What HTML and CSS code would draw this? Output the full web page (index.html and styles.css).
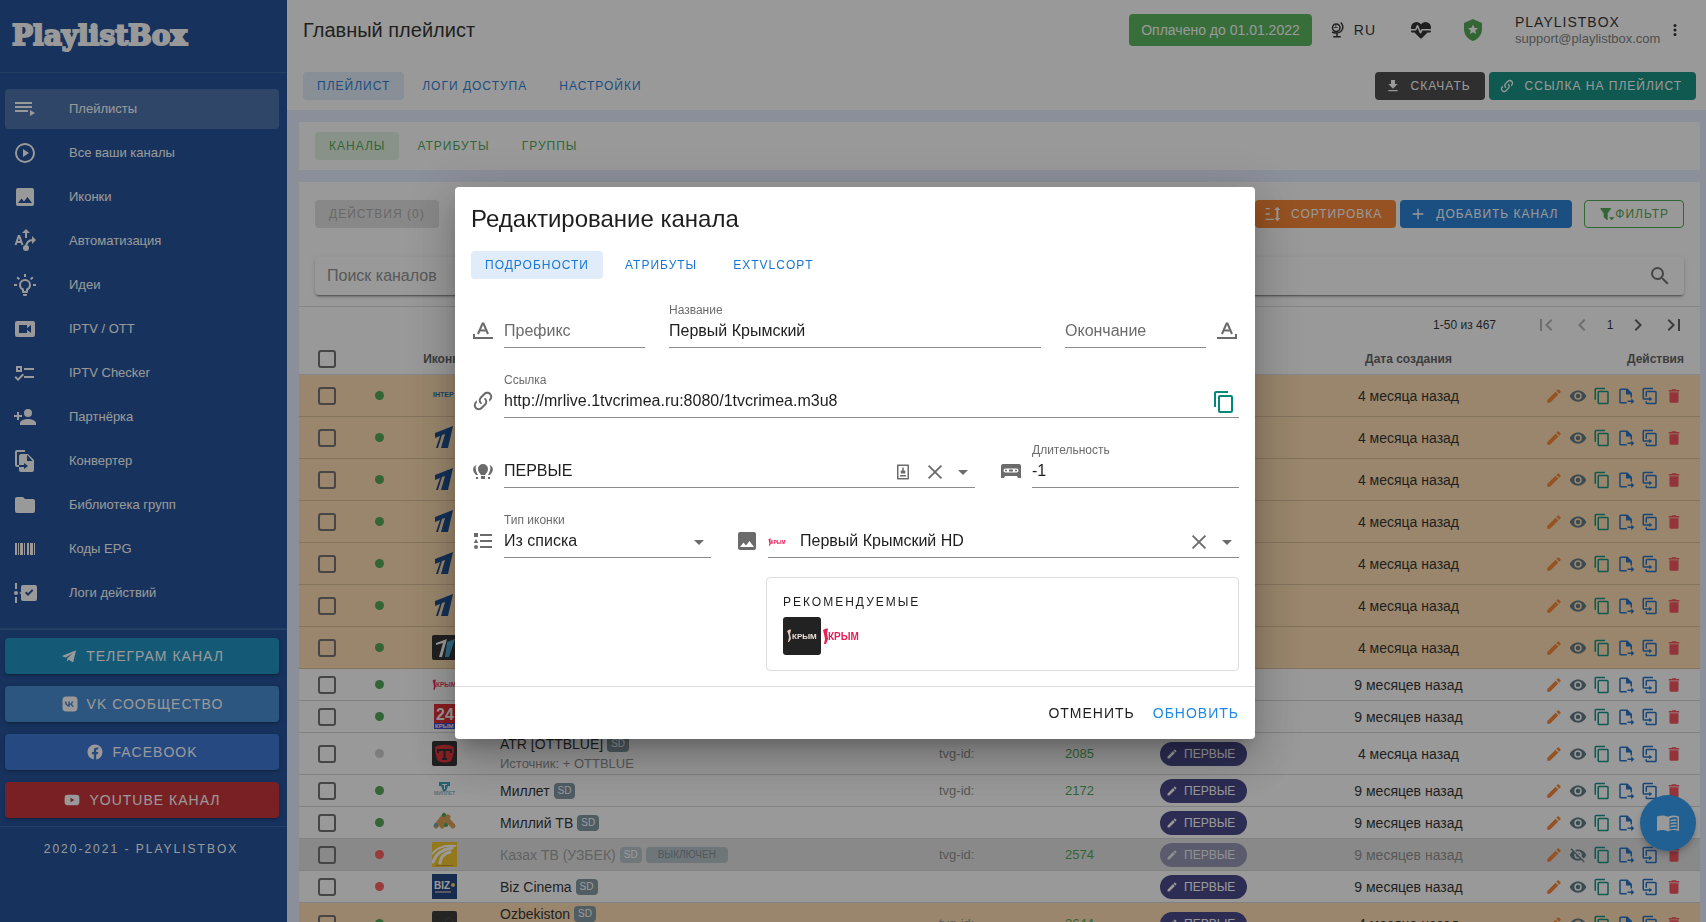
FILE: index.html
```html
<!DOCTYPE html>
<html lang="ru">
<head>
    <meta charset="UTF-8">
    <meta name="viewport" content="width=device-width, initial-scale=1">
    <title>Главный плейлист</title>
    <link rel="stylesheet" href="styles.css">
</head>
<body>

<!-- icons -->
<svg class="sprite" aria-hidden="true">
    <symbol id="i-playlist" viewBox="0 0 24 24"><path d="M19 9H2v2h17V9zm0-4H2v2h17V5zM2 15h13v-2H2v2zm15-2v6l5-3-5-3z"/></symbol>
    <symbol id="i-play" viewBox="0 0 24 24"><path d="M12,20C7.59,20 4,16.41 4,12C4,7.59 7.59,4 12,4C16.41,4 20,7.59 20,12C20,16.41 16.41,20 12,20M12,2A10,10 0 0,0 2,12A10,10 0 0,0 12,22A10,10 0 0,0 22,12A10,10 0 0,0 12,2M10,16L16,12L10,8V16Z"/></symbol>
    <symbol id="i-image" viewBox="0 0 24 24"><path d="M8.5,13.5L11,16.5L14.5,12L19,18H5M21,19V5C21,3.89 20.1,3 19,3H5A2,2 0 0,0 3,5V19A2,2 0 0,0 5,21H19A2,2 0 0,0 21,19Z"/></symbol>
    <symbol id="i-auto" viewBox="0 0 24 24"><path fill="none" stroke="currentColor" stroke-width="2" d="M2.5 16L5.7 7h.6L9.5 16M3.6 13h4.8M13 3v6M13 19c0-5 1.500-8 7-8"/><path d="M13 0l4 4H9zM19 7l4 4-4 4z"/><circle cx="13" cy="19" r="3"/></symbol>
    <symbol id="i-idea" viewBox="0 0 24 24"><path d="M20,11H23V13H20V11M1,11H4V13H1V11M13,1V4H11V1H13M4.92,3.5L7.05,5.64L5.63,7.05L3.5,4.93L4.92,3.5M16.95,5.63L19.07,3.5L20.5,4.93L18.37,7.05L16.95,5.63M12,6A6,6 0 0,1 18,12C18,14.22 16.79,16.16 15,17.2V19A1,1 0 0,1 14,20H10A1,1 0 0,1 9,19V17.2C7.21,16.16 6,14.22 6,12A6,6 0 0,1 12,6M14,21V22A1,1 0 0,1 13,23H11A1,1 0 0,1 10,22V21H14M11,18H13V15.87C14.73,15.43 16,13.86 16,12A4,4 0 0,0 12,8A4,4 0 0,0 8,12C8,13.86 9.27,15.43 11,15.87V18Z"/></symbol>
    <symbol id="i-video" viewBox="0 0 24 24"><path d="M18,16L14,12.8V16H6V8H14V11.2L18,8M20,4H4A2,2 0 0,0 2,6V18A2,2 0 0,0 4,20H20A2,2 0 0,0 22,18V6A2,2 0 0,0 20,4Z"/></symbol>
    <symbol id="i-checks" viewBox="0 0 24 24"><path d="M3,5H9V11H3V5M5,7V9H7V7H5M11,7H21V9H11V7M11,15H21V17H11V15M5,20L1.5,16.5L2.91,15.09L5,17.17L9.59,12.59L11,14L5,20Z"/></symbol>
    <symbol id="i-account" viewBox="0 0 24 24"><path d="M15,14C12.33,14 7,15.33 7,18V20H23V18C23,15.33 17.67,14 15,14M6,10V7H4V10H1V12H4V15H6V12H9V10M15,12A4,4 0 0,0 19,8A4,4 0 0,0 15,4A4,4 0 0,0 11,8A4,4 0 0,0 15,12Z"/></symbol>
    <symbol id="i-convert" viewBox="0 0 24 24"><path d="M14,12H19.500L14,5.500V12M8,5H15L21,11V21A2,2 0 0,1 19,23H8C6.890,23 6,22.100 6,21V18H11V20L15,17L11,14V16H6V7A2,2 0 0,1 8,5M12,3H4V16H6V18H4A2,2 0 0,1 2,16V3A2,2 0 0,1 4,1H12V3Z"/></symbol>
    <symbol id="i-folder" viewBox="0 0 24 24"><path d="M10,4H4C2.89,4 2,4.89 2,6V18A2,2 0 0,0 4,20H20A2,2 0 0,0 22,18V8C22,6.89 21.1,6 20,6H12L10,4Z"/></symbol>
    <symbol id="i-barcode" viewBox="0 0 24 24"><path d="M2,6H4V18H2V6M5,6H6V18H5V6M7,6H10V18H7V6M11,6H12V18H11V6M14,6H16V18H14V6M17,6H20V18H17V6M21,6H22V18H21V6Z"/></symbol>
    <symbol id="i-timeline" viewBox="0 0 24 24"><path d="M2 2h2v6H2zM2 16h2v6H2zM3 10a2 2 0 1 1 0 4a2 2 0 0 1 0-4zM22 4H10a2 2 0 0 0-2 2v5l-2 1l2 1v5a2 2 0 0 0 2 2h12a2 2 0 0 0 2-2V6a2 2 0 0 0-2-2zM15 15l-3-3 1.400-1.400L15 12.200l4-4 1.400 1.400z"/></symbol>
    <symbol id="i-telegram" viewBox="-2 -2 28 28"><path d="M22 3.500L2 11.500c-.8.4-.7.9 0 1.200l5 1.600L18 7.200l-8.600 8.200-.4 5.100 3-2.800 5 3.600c1 .5 1.500.2 1.800-.8L22.600 4.200c.2-.6 0-.9-.6-.7z"/></symbol>
    <symbol id="i-vk" viewBox="0 0 24 24"><rect x="2" y="2" width="20" height="20" rx="5"/><path class="cut" d="M5 8.500h2c.4 2.400 1.400 4 2.700 4.400V8.500h2v3c1.200-.2 2.200-1.400 2.800-3h2.100c-.4 1.600-1.300 2.800-2.500 3.500 1.400.6 2.400 1.700 3 3.500h-2.300c-.5-1.300-1.600-2.300-3.100-2.500v2.500C8 15.600 5.200 13 5 8.500z"/></symbol>
    <symbol id="i-facebook" viewBox="0 0 24 24"><path d="M12 2.04C6.5 2.04 2 6.53 2 12.06C2 17.06 5.66 21.21 10.44 21.96V14.96H7.9V12.06H10.44V9.85C10.44 7.34 11.93 5.96 14.22 5.96C15.31 5.96 16.45 6.15 16.45 6.15V8.62H15.19C13.95 8.62 13.56 9.39 13.56 10.18V12.06H16.34L15.89 14.96H13.56V21.96A10 10 0 0 0 22 12.06C22 6.53 17.5 2.04 12 2.04Z"/></symbol>
    <symbol id="i-youtube" viewBox="0 0 24 24"><path d="M10,15L15.19,12L10,9V15M21.560,7.170C22,9 22,15 21.560,16.830C21.310,17.730 20.730,18.310 19.830,18.560C17,19.100 7,19.100 4.170,18.560C3.270,18.310 2.690,17.730 2.440,16.830C2,15 2,9 2.440,7.170C2.690,6.270 3.270,5.690 4.170,5.440C7,4.900 17,4.900 19.830,5.440C20.730,5.690 21.310,6.270 21.560,7.170Z"/></symbol>
    <symbol id="i-globe" viewBox="0 0 24 24"><g fill="none" stroke="currentColor" stroke-width="2"><circle cx="11" cy="9" r="5"/><path d="M17 2c5 5 3 13-5 14c-2.500.3-5-.3-6.500-1.500M12 16v5M7 21h10"/></g><path d="M8 8h5v1H8zM10 5h1v4h-1z"/></symbol>
    <symbol id="i-heart" viewBox="0 0 24 24"><path d="M7.5,4A5.5,5.5 0 0,0 2,9.5C2,10 2.09,10.5 2.22,11H6.3L7.57,7.63C7.87,6.83 9.05,6.75 9.43,7.63L11.5,13L12.09,11.58C12.22,11.25 12.57,11 13,11H21.78C21.91,10.5 22,10 22,9.5A5.5,5.5 0 0,0 16.5,4C14.64,4 13,4.93 12,6.34C11,4.93 9.36,4 7.5,4V4M3,12.5A1,1 0 0,0 2,13.5A1,1 0 0,0 3,14.5H5.44L11,20C12,20.9 12,20.9 13,20L18.56,14.5H21A1,1 0 0,0 22,13.5A1,1 0 0,0 21,12.5H13.4L12.47,14.8C12.07,15.81 10.92,15.67 10.55,14.83L8.5,9.5L7.54,11.83C7.39,12.21 7.05,12.5 6.6,12.5H3Z"/></symbol>
    <symbol id="i-shield" viewBox="0 0 24 24"><path d="M12,1L3,5V11C3,16.55 6.84,21.74 12,23C17.16,21.74 21,16.55 21,11V5L12,1M15.08,16L12,14.15L8.93,16L9.74,12.5L7.03,10.16L10.61,9.85L12,6.55L13.39,9.84L16.97,10.15L14.26,12.5L15.08,16Z"/></symbol>
    <symbol id="i-dots" viewBox="0 0 24 24"><circle cx="12" cy="6" r="2"/><circle cx="12" cy="12" r="2"/><circle cx="12" cy="18" r="2"/></symbol>
    <symbol id="i-download" viewBox="0 0 24 24"><path d="M5,20H19V18H5M19,9H15V3H9V9H5L12,16L19,9Z"/></symbol>
    <symbol id="i-link" viewBox="0 0 24 24"><path d="M10.59,13.41C11,13.8 11,14.44 10.59,14.83C10.2,15.22 9.56,15.22 9.17,14.83C7.22,12.88 7.22,9.71 9.17,7.76V7.76L12.71,4.22C14.66,2.27 17.83,2.27 19.78,4.22C21.73,6.17 21.73,9.34 19.78,11.29L18.29,12.78C18.3,11.96 18.17,11.14 17.89,10.36L18.36,9.88C19.54,8.71 19.54,6.81 18.36,5.64C17.19,4.46 15.29,4.46 14.12,5.64L10.59,9.17C9.41,10.34 9.41,12.24 10.59,13.41M13.41,9.17C13.8,8.78 14.44,8.78 14.83,9.17C16.78,11.12 16.78,14.29 14.83,16.24V16.24L11.29,19.78C9.34,21.73 6.17,21.73 4.22,19.78C2.27,17.83 2.27,14.66 4.22,12.71L5.71,11.22C5.7,12.04 5.83,12.86 6.11,13.65L5.64,14.12C4.46,15.29 4.46,17.19 5.64,18.36C6.81,19.54 8.71,19.54 9.88,18.36L13.41,14.83C14.59,13.66 14.59,11.76 13.41,10.59C13,10.2 13,9.56 13.41,9.17Z"/></symbol>
    <symbol id="i-sort" viewBox="0 0 24 24"><path d="M1 3h6v2H1zM1 11h6v2H1zM1 19h12v2H1zM17 6v12h-3l4.500 5L23 18h-3V6h3l-4.500-5L14 6z"/></symbol>
    <symbol id="i-plus" viewBox="0 0 24 24"><path d="M20 13h-7v7h-2v-7H4v-2h7V4h2v7h7z"/></symbol>
    <symbol id="i-filter" viewBox="0 0 24 24"><path d="M13 19.900a1 1 0 0 1-1.700.9l-4-4A1 1 0 0 1 7 16v-5.100L2.200 4.600A1 1 0 0 1 3 3h14a1 1 0 0 1 .8 1.600L13 10.800zM15 17h8l-4 4.500z"/></symbol>
    <symbol id="i-search" viewBox="0 0 24 24"><path d="M9.5,3A6.5,6.5 0 0,1 16,9.5C16,11.11 15.41,12.59 14.44,13.73L14.71,14H15.5L20.5,19L19,20.5L14,15.5V14.71L13.73,14.44C12.59,15.41 11.11,16 9.5,16A6.5,6.5 0 0,1 3,9.5A6.5,6.5 0 0,1 9.5,3M9.5,5C7,5 5,7 5,9.5C5,12 7,14 9.5,14C12,14 14,12 14,9.5C14,7 12,5 9.5,5Z"/></symbol>
    <symbol id="i-first" viewBox="0 0 24 24"><path d="M18.41,16.59L13.82,12L18.41,7.41L17,6L11,12L17,18L18.41,16.59M6,6H8V18H6V6Z"/></symbol>
    <symbol id="i-left" viewBox="0 0 24 24"><path d="M15.41,16.58L10.83,12L15.41,7.41L14,6L8,12L14,18L15.41,16.58Z"/></symbol>
    <symbol id="i-right" viewBox="0 0 24 24"><path d="M8.59,16.58L13.17,12L8.59,7.41L10,6L16,12L10,18L8.59,16.58Z"/></symbol>
    <symbol id="i-last" viewBox="0 0 24 24"><path d="M5.59,7.41L10.18,12L5.59,16.59L7,18L13,12L7,6L5.59,7.41M16,6H18V18H16V6Z"/></symbol>
    <symbol id="i-pencil" viewBox="0 0 24 24"><path d="M20.71,7.04C21.1,6.65 21.1,6 20.71,5.63L18.37,3.29C18,2.9 17.35,2.9 16.96,3.29L15.12,5.12L18.87,8.87M3,17.25V21H6.75L17.81,9.93L14.06,6.18L3,17.25Z"/></symbol>
    <symbol id="i-eye" viewBox="0 0 24 24"><path d="M12,9A3,3 0 0,0 9,12A3,3 0 0,0 12,15A3,3 0 0,0 15,12A3,3 0 0,0 12,9M12,17A5,5 0 0,1 7,12A5,5 0 0,1 12,7A5,5 0 0,1 17,12A5,5 0 0,1 12,17M12,4.5C7,4.5 2.73,7.61 1,12C2.73,16.39 7,19.5 12,19.5C17,19.5 21.27,16.39 23,12C21.27,7.61 17,4.5 12,4.5Z"/></symbol>
    <symbol id="i-eye-off" viewBox="0 0 24 24"><path d="M11.83,9L15,12.16C15,12.11 15,12.05 15,12A3,3 0 0,0 12,9C11.94,9 11.89,9 11.83,9M7.53,9.8L9.08,11.35C9.03,11.56 9,11.77 9,12A3,3 0 0,0 12,15C12.22,15 12.44,14.97 12.65,14.92L14.2,16.47C13.53,16.8 12.79,17 12,17A5,5 0 0,1 7,12C7,11.21 7.2,10.47 7.53,9.8M2,4.27L4.28,6.55L4.73,7C3.08,8.3 1.78,10 1,12C2.73,16.39 7,19.5 12,19.5C13.55,19.5 15.03,19.2 16.38,18.66L16.81,19.08L19.73,22L21,20.73L3.27,3M12,7A5,5 0 0,1 17,12C17,12.64 16.87,13.26 16.64,13.82L19.57,16.75C21.07,15.5 22.27,13.86 23,12C21.27,7.61 17,4.5 12,4.5C10.6,4.5 9.26,4.75 8,5.2L10.17,7.35C10.74,7.13 11.35,7 12,7Z"/></symbol>
    <symbol id="i-copy" viewBox="0 0 24 24"><path d="M19,21H8V7H19M19,5H8A2,2 0 0,0 6,7V21A2,2 0 0,0 8,23H19A2,2 0 0,0 21,21V7A2,2 0 0,0 19,5M16,1H4A2,2 0 0,0 2,3V17H4V3H16V1Z"/></symbol>
    <symbol id="i-export" viewBox="0 0 24 24"><path d="M14 2H5a2 2 0 0 0-2 2v16a2 2 0 0 0 2 2h8v-2H5V4h7v6h6v4h2V8zM19 15v3h-5v2h5v3l4-4z"/></symbol>
    <symbol id="i-duplicate" viewBox="0 0 24 24"><path d="M11,17H4A2,2 0 0,1 2,15V3A2,2 0 0,1 4,1H16V3H4V15H11V13L15,16L11,19V17M19,21V7H8V13H6V7A2,2 0 0,1 8,5H19A2,2 0 0,1 21,7V21A2,2 0 0,1 19,23H8A2,2 0 0,1 6,21V19H8V21H19Z"/></symbol>
    <symbol id="i-delete" viewBox="0 0 24 24"><path d="M19,4H15.5L14.5,3H9.5L8.5,4H5V6H19M6,19A2,2 0 0,0 8,21H16A2,2 0 0,0 18,19V7H6V19Z"/></symbol>
    <symbol id="i-down" viewBox="0 0 24 24"><path d="M7,10L12,15L17,10H7Z"/></symbol>
    <symbol id="i-close" viewBox="0 0 24 24"><path fill="none" stroke="currentColor" stroke-width="2" d="M5 5l14 14M19 5L5 19"/></symbol>
    <symbol id="i-prefix" viewBox="0 0 24 24"><path fill="none" stroke="currentColor" stroke-width="2" d="M7 15l4.500-10.500h1L17 15M9 11.500h6"/><path d="M2 15h2v3h18v2H2z"/></symbol>
    <symbol id="i-suffix" viewBox="0 0 24 24"><path fill="none" stroke="currentColor" stroke-width="2" d="M7 15l4.500-10.500h1L17 15M9 11.500h6"/><path d="M22 15h-2v3H2v2h20z"/></symbol>
    <symbol id="i-group" viewBox="0 0 24 24"><path d="M12 5a5 5 0 0 1 5 5c0 2.500-1.500 4-3 6h-4c-1.500-2-3-3.500-3-6a5 5 0 0 1 5-5zM10 17h4v3h-4zM5.500 6C4 8 4.500 12 7 16H5c-4-4-4-8 .5-10zM18.500 6C20 8 19.500 12 17 16h2c4-4 4-8-.5-10zM5 18h2v2H5zM17 18h2v2h-2z"/></symbol>
    <symbol id="i-cassette" viewBox="0 0 24 24"><path fill-rule="evenodd" d="M4 5h16a2 2 0 0 1 2 2v12h-3l-1-2H6l-1 2H2V7a2 2 0 0 1 2-2zM6.500 9.500a2 2 0 0 0 0 4h11a2 2 0 0 0 0-4zM10 10.500h4v2h-4zM7 10.500a1 1 0 1 1 0 2a1 1 0 0 1 0-2zM17 10.500a1 1 0 1 1 0 2a1 1 0 0 1 0-2z"/></symbol>
    <symbol id="i-list" viewBox="0 0 24 24"><path d="M3 4h4v4H3zM5 10l2.300 4H2.700zM5 16a2 2 0 1 1 0 4a2 2 0 0 1 0-4zM9 5h12v2H9zM9 11h12v2H9zM9 17h12v2H9z"/></symbol>
    <symbol id="i-badge" viewBox="0 0 24 24"><path fill-rule="evenodd" d="M5 2h14a1 1 0 0 1 1 1v18a1 1 0 0 1-1 1H5a1 1 0 0 1-1-1V3a1 1 0 0 1 1-1zM6 4v16h12V4zM11 6h2v4h2v4H9v-4h2zM8 16h8v2H8z"/></symbol>
    <symbol id="i-book" viewBox="0 0 24 24"><path fill-rule="evenodd" d="M12 6C9.500 4 5 4 1 5.500V20c4-1.500 8-1.500 11 .5C15 18.500 19 18.500 23 20V5.500C19 4 14.500 4 12 6zM13.500 7.500c2.500-1.400 5-1.500 8-.8V18c-3-.6-5.500-.4-8 .6zM14.500 9c2-.8 4-1 6-.5V10c-2-.4-4-.2-6 .5zM14.500 12c2-.8 4-1 6-.5V13c-2-.4-4-.2-6 .5zM14.500 15c2-.8 4-1 6-.5V16c-2-.4-4-.2-6 .5z"/></symbol>

    <!-- channel logos -->
    <symbol id="l-inter" viewBox="0 0 25 25"><text x="1" y="14" class="logo-inter">ІНТЕР</text></symbol>
    <symbol id="l-one" viewBox="0 0 25 25"><path fill="#0a3f85" d="M3 8L21 1l-5 22H9l4-14-3 1-4 13H4l4-12-5 2z"/></symbol>
    <symbol id="l-one-dark" viewBox="0 0 25 25"><rect width="25" height="25" rx="2" fill="#222"/><path fill="#fff" d="M4 8l11-4-5 18H7l4-14-7 2z"/><path fill="#42a5d5" d="M15 7l8-3-6 18h-4z"/></symbol>
    <symbol id="l-krym" viewBox="0 0 38 38"><path fill="#e91e56" d="M1 13c2-1 4-2 5-1l-1 4 1 6-2 5H2l1-5-1-5z"/><text x="6" y="23" class="logo-krym">КРЫМ</text></symbol>
    <symbol id="l-krym-dark" viewBox="0 0 38 38"><rect width="38" height="38" rx="3" fill="#222"/><path fill="#e8c8b8" d="M4 14c2-1 3-2 4-1l-1 4 1 5-2 3H5l1-5-1-4z"/><text x="9" y="22" class="logo-krym-dark">КРЫМ</text></symbol>
    <symbol id="l-24" viewBox="0 0 25 25"><rect x="2" width="23" height="19" fill="#e31b23"/><rect x="2" y="19" width="23" height="6" fill="#3440c8"/><text x="4" y="16" class="logo-24">24</text><text x="3" y="24" class="logo-24-sub">КРЫМ</text></symbol>
    <symbol id="l-atr" viewBox="0 0 25 25"><rect width="25" height="25" rx="2" fill="#222"/><path fill="#e5222c" d="M3 6c6-3 13-3 19 0 0 6-1 10-3 14-5 2-8 2-13 0C4 16 3 12 3 6z"/><path fill="none" stroke="#222" stroke-width="2" d="M6 12V9h13v3M12.500 9v9M10 18h5"/></symbol>
    <symbol id="l-millet" viewBox="0 0 25 25"><path fill="#2b9cbd" d="M7 4h11v4h-2l-2 5h-3L9 8H7z"/><path fill="#fff" d="M10 6h5v1h-2v4h-1V7h-2z"/><text x="2" y="17" class="logo-millet">МИЛЛЕТ</text></symbol>
    <symbol id="l-milliy" viewBox="0 0 25 25"><g fill="none" stroke="#d89a45" stroke-width="5" stroke-linecap="round"><path d="M4 16L12 6l9 10"/><path d="M10 16l6-9"/></g><circle cx="12" cy="5" r="2" fill="#37994a"/><circle cx="4" cy="15" r="2" fill="#4b9fc4"/><circle cx="14" cy="15" r="2" fill="#37994a"/></symbol>
    <symbol id="l-kazakh" viewBox="0 0 25 25"><rect width="25" height="25" fill="#f5c518"/><g fill="none" stroke="#fff" stroke-linecap="round"><path stroke-width="2" d="M0 12C6 4 15 3 23 4"/><path stroke-width="3" d="M1 20C4 11 12 7 20 6"/><path stroke-width="3" d="M8 21C9 14 13 11 18 10"/></g><path fill="#c98a10" d="M4 23h17v1H4z"/></symbol>
    <symbol id="l-biz" viewBox="0 0 25 25"><rect width="25" height="25" fill="#0d3475"/><text x="2" y="15" class="logo-biz">BIZ</text><circle cx="21" cy="11" r="2" fill="#f0c96a"/><path fill="#889" d="M3 17h16v2H3z"/></symbol>
    <symbol id="l-dark" viewBox="0 0 25 25"><rect width="25" height="25" rx="2" fill="#2a2a2a"/><path fill="none" stroke="#4d3a30" d="M13 13c0-8 8-8 8 0"/></symbol>
</svg>

<div class="app">
    <nav class="sidebar">
        <a href="#" class="logo">PlaylistBox</a>

        <ul class="menu">
            <li><a href="#" class="active"><svg class="icon"><use href="#i-playlist"/></svg>Плейлисты</a></li>
            <li><a href="#"><svg class="icon"><use href="#i-play"/></svg>Все ваши каналы</a></li>
            <li><a href="#"><svg class="icon"><use href="#i-image"/></svg>Иконки</a></li>
            <li><a href="#"><svg class="icon"><use href="#i-auto"/></svg>Автоматизация</a></li>
            <li><a href="#"><svg class="icon"><use href="#i-idea"/></svg>Идеи</a></li>
            <li><a href="#"><svg class="icon"><use href="#i-video"/></svg>IPTV / OTT</a></li>
            <li><a href="#"><svg class="icon"><use href="#i-checks"/></svg>IPTV Checker</a></li>
            <li><a href="#"><svg class="icon"><use href="#i-account"/></svg>Партнёрка</a></li>
            <li><a href="#"><svg class="icon"><use href="#i-convert"/></svg>Конвертер</a></li>
            <li><a href="#"><svg class="icon"><use href="#i-folder"/></svg>Библиотека групп</a></li>
            <li><a href="#"><svg class="icon"><use href="#i-barcode"/></svg>Коды EPG</a></li>
            <li><a href="#"><svg class="icon"><use href="#i-timeline"/></svg>Логи действий</a></li>
        </ul>

        <div class="social">
            <a href="#" class="telegram"><svg class="icon-sm"><use href="#i-telegram"/></svg>Телеграм канал</a>
            <a href="#" class="vk"><svg class="icon-sm"><use href="#i-vk"/></svg>VK сообщество</a>
            <a href="#" class="facebook"><svg class="icon-sm"><use href="#i-facebook"/></svg>Facebook</a>
            <a href="#" class="youtube"><svg class="icon-sm"><use href="#i-youtube"/></svg>YouTube канал</a>
        </div>

        <div class="copyright">2020-2021 - PlaylistBox</div>
    </nav>

    <main class="main">
        <header class="header">
            <div class="header-top">
                <h1>Главный плейлист</h1>
                <button class="paid">Оплачено до 01.01.2022</button>
                <button class="lang"><svg class="icon-sm"><use href="#i-globe"/></svg>RU</button>
                <button class="plain" aria-label="Статус"><svg class="icon"><use href="#i-heart"/></svg></button>
                <button class="plain shield" aria-label="Защита"><svg class="icon"><use href="#i-shield"/></svg></button>
                <div class="user">
                    <div class="user-name">PlaylistBox</div>
                    <div class="user-mail">support@playlistbox.com</div>
                </div>
                <button class="plain" aria-label="Меню"><svg class="icon-sm"><use href="#i-dots"/></svg></button>
            </div>
            <div class="header-bottom">
                <div class="tabs blue">
                    <a href="#" class="tab active">Плейлист</a>
                    <a href="#" class="tab">Логи доступа</a>
                    <a href="#" class="tab">Настройки</a>
                </div>
                <div class="buttons">
                    <button class="btn dark"><svg class="icon-xs"><use href="#i-download"/></svg>Скачать</button>
                    <button class="btn teal"><svg class="icon-xs"><use href="#i-link"/></svg>Ссылка на плейлист</button>
                </div>
            </div>
        </header>

        <div class="content">
            <div class="card subtabs">
                <div class="tabs green">
                    <a href="#" class="tab active">Каналы</a>
                    <a href="#" class="tab">Атрибуты</a>
                    <a href="#" class="tab">Группы</a>
                </div>
            </div>

            <div class="card">
                <div class="toolbar">
                    <button class="btn disabled" disabled>Действия (0)</button>
                    <div class="buttons">
                        <button class="btn orange"><svg class="icon-xs"><use href="#i-sort"/></svg>Сортировка</button>
                        <button class="btn primary"><svg class="icon-xs"><use href="#i-plus"/></svg>Добавить канал</button>
                        <button class="btn outlined"><svg class="icon-xs"><use href="#i-filter"/></svg>Фильтр</button>
                    </div>
                </div>

                <div class="search">
                    <input type="text" placeholder="Поиск каналов" aria-label="Поиск каналов">
                    <svg class="icon"><use href="#i-search"/></svg>
                </div>

                <div class="pager">
                    <span class="pager-info">1-50 из 467</span>
                    <button disabled aria-label="Первая"><svg class="icon"><use href="#i-first"/></svg></button>
                    <button disabled aria-label="Назад"><svg class="icon"><use href="#i-left"/></svg></button>
                    <span class="pager-page">1</span>
                    <button aria-label="Вперёд"><svg class="icon"><use href="#i-right"/></svg></button>
                    <button aria-label="Последняя"><svg class="icon"><use href="#i-last"/></svg></button>
                </div>

                <table class="channels">
                    <thead>
                        <tr>
                            <th class="c-check"><input type="checkbox" aria-label="Выбрать все"></th>
                            <th class="c-dot"></th>
                            <th class="c-icon">Иконка</th>
                            <th class="c-name"></th>
                            <th class="c-tvg"></th>
                            <th class="c-id"></th>
                            <th class="c-group"></th>
                            <th class="c-date">Дата создания</th>
                            <th class="c-actions">Действия</th>
                        </tr>
                    </thead>
                    <tbody id="rows"></tbody>
                </table>
            </div>
        </div>
    </main>

    <button class="fab" aria-label="Справка"><svg class="icon"><use href="#i-book"/></svg></button>
</div>

<div class="overlay">
    <form class="dialog" role="dialog" aria-labelledby="dialog-title">
        <div class="dialog-body">
            <h2 id="dialog-title">Редактирование канала</h2>
            <div class="tabs blue dialog-tabs">
                <a href="#" class="tab active">Подробности</a>
                <a href="#" class="tab">Атрибуты</a>
                <a href="#" class="tab">EXTVLCOPT</a>
            </div>

            <div class="grid">
                <div class="field span-3">
                    <svg class="icon"><use href="#i-prefix"/></svg>
                    <div class="field-box"><div class="line"><input type="text" placeholder="Префикс" aria-label="Префикс"></div></div>
                </div>
                <div class="field span-6">
                    <div class="field-box">
                        <label for="name">Название</label>
                        <div class="line"><input type="text" id="name" value="Первый Крымский"></div>
                    </div>
                </div>
                <div class="field span-3">
                    <div class="field-box"><div class="line"><input type="text" placeholder="Окончание" aria-label="Окончание"></div></div>
                    <svg class="icon"><use href="#i-suffix"/></svg>
                </div>

                <div class="field span-12">
                    <svg class="icon"><use href="#i-link"/></svg>
                    <div class="field-box">
                        <label for="url">Ссылка</label>
                        <div class="line">
                            <input type="text" id="url" value="http://mrlive.1tvcrimea.ru:8080/1tvcrimea.m3u8">
                            <button type="button" class="plain copy" aria-label="Скопировать"><svg class="icon"><use href="#i-copy"/></svg></button>
                        </div>
                    </div>
                </div>

                <div class="field span-8">
                    <svg class="icon"><use href="#i-group"/></svg>
                    <div class="field-box">
                        <div class="line">
                            <input type="text" value="ПЕРВЫЕ" aria-label="Группа">
                            <svg class="icon-sm group-badge"><use href="#i-badge"/></svg>
                            <button type="button" class="plain" aria-label="Очистить"><svg class="icon"><use href="#i-close"/></svg></button>
                            <svg class="icon"><use href="#i-down"/></svg>
                        </div>
                    </div>
                </div>
                <div class="field span-4">
                    <svg class="icon"><use href="#i-cassette"/></svg>
                    <div class="field-box">
                        <label for="duration">Длительность</label>
                        <div class="line"><input type="text" id="duration" value="-1"></div>
                    </div>
                </div>

                <div class="field span-4">
                    <svg class="icon"><use href="#i-list"/></svg>
                    <div class="field-box">
                        <label for="icon-type">Тип иконки</label>
                        <div class="line">
                            <select id="icon-type"><option>Из списка</option></select>
                            <svg class="icon"><use href="#i-down"/></svg>
                        </div>
                    </div>
                </div>
                <div class="field span-8">
                    <svg class="icon"><use href="#i-image"/></svg>
                    <div class="field-box">
                        <div class="line">
                            <svg class="picked"><use href="#l-krym"/></svg>
                            <input type="text" value="Первый Крымский HD" aria-label="Иконка">
                            <button type="button" class="plain" aria-label="Очистить"><svg class="icon"><use href="#i-close"/></svg></button>
                            <svg class="icon"><use href="#i-down"/></svg>
                        </div>
                    </div>
                </div>
            </div>

            <div class="grid">
                <div class="recommended">
                    <div class="recommended-title">Рекомендуемые</div>
                    <div class="recommended-icons">
                        <button type="button" class="plain" aria-label="Крым тёмный"><svg><use href="#l-krym-dark"/></svg></button>
                        <button type="button" class="plain" aria-label="Крым"><svg><use href="#l-krym"/></svg></button>
                    </div>
                </div>
            </div>
        </div>
        <div class="dialog-actions">
            <button type="button">Отменить</button>
            <button type="button" class="accent">Обновить</button>
        </div>
    </form>
</div>

<script src="script.js"></script>
</body>
</html>
```
FILE: styles.css
```css
* {
    box-sizing: border-box;
}

body {
    margin: 0;
    font-family: "Liberation Sans", Arial, sans-serif;
    font-size: 14px;
    color: #1e1e1e;
    background: #e6edff;
}

h1, h2 {
    margin: 0;
    font-weight: normal;
}

a {
    text-decoration: none;
}

button, input, select {
    font-family: inherit;
    color: inherit;
}

button {
    border: 0;
    padding: 0;
    background: none;
    cursor: pointer;
}

svg {
    display: block;
    flex: none;
    fill: currentColor;
}

.sprite {
    display: none;
}

.icon {
    width: 24px;
    height: 24px;
}

.icon-sm {
    width: 18px;
    height: 18px;
}

.icon-xs {
    width: 16px;
    height: 16px;
}

.app {
    display: flex;
    height: 100vh;
    overflow: hidden;
}

/* sidebar */
.sidebar {
    flex: none;
    width: 287px;
    background: #0d4190;
    color: #fff;
}

.logo {
    display: flex;
    align-items: center;
    height: 72px;
    padding: 0 0 2px 12px;
    color: #fff;
    font-family: "DejaVu Serif", serif;
    font-weight: bold;
    font-size: 28px;
    -webkit-text-stroke: 2px #fff;
}

.menu {
    list-style: none;
    margin: 0;
    padding: 16px 8px 15px 5px;
    border-top: 1px solid rgba(255, 255, 255, 0.12);
    border-bottom: 2px solid rgba(255, 255, 255, 0.12);
}

.menu a {
    display: flex;
    align-items: center;
    gap: 32px;
    height: 40px;
    margin-bottom: 4px;
    padding: 0 0 1px 8px;
    border-radius: 4px;
    color: #fff;
    font-size: 13px;
}

.menu li:last-child a {
    margin-bottom: 0;
}

.menu .active {
    background: rgba(255, 255, 255, 0.2);
}

.social {
    display: flex;
    flex-direction: column;
    gap: 12px;
    padding: 8px 8px 8px 5px;
    border-bottom: 1px solid rgba(255, 255, 255, 0.12);
}

.social a {
    display: flex;
    align-items: center;
    justify-content: center;
    gap: 8px;
    height: 36px;
    border-radius: 4px;
    color: #fff;
    letter-spacing: 1px;
    text-transform: uppercase;
    box-shadow: 0 3px 1px -2px rgba(0, 0, 0, 0.2), 0 2px 2px rgba(0, 0, 0, 0.14), 0 1px 5px rgba(0, 0, 0, 0.12);
}

.telegram {
    background: #0b8abf;
}

.vk {
    background: #3682d0;
}

.cut {
    fill: #3682d0;
}

.facebook {
    background: #2e6bd5;
}

.youtube {
    background: #c4202a;
}

.copyright {
    padding: 15px 5px 0 0;
    text-align: center;
    font-size: 12px;
    letter-spacing: 2px;
    text-transform: uppercase;
}

/* header */
.main {
    flex: 1;
    min-width: 0;
}

.header {
    height: 110px;
    padding-left: 16px;
    background: #fff;
}

.header-top {
    display: flex;
    align-items: center;
    height: 60px;
    padding-right: 22px;
}

.header-top h1 {
    flex: 1;
    font-size: 20px;
}

.paid {
    height: 32px;
    padding: 0 12px;
    border-radius: 4px;
    background: #4caf50;
    color: #fff;
    font-size: 14px;
}

.lang {
    display: flex;
    align-items: center;
    gap: 8px;
    margin: 0 33px 0 16px;
    font-size: 14px;
    letter-spacing: 1px;
}

.header-top .plain.shield {
    margin: 0 30px 0 28px;
    color: #43a047;
}

.user {
    width: 151px;
    line-height: 18px;
}

.user-name {
    letter-spacing: 1px;
    text-transform: uppercase;
}

.user-mail {
    font-size: 13px;
    line-height: 16px;
    color: #777;
}

.header-bottom {
    display: flex;
    justify-content: space-between;
    padding: 12px 10px 0 0;
}

.tabs {
    display: flex;
    gap: 4px;
}

.tab {
    display: flex;
    align-items: center;
    height: 28px;
    padding: 0 14px;
    border-radius: 4px;
    font-size: 12px;
    letter-spacing: 1px;
    text-transform: uppercase;
}

.blue .tab {
    color: #1976d2;
}

.blue .active {
    background: #e0ecf9;
}

.green .tab {
    color: #43a047;
}

.green .active {
    background: #e1f2e2;
}

.buttons {
    display: flex;
    gap: 4px;
}

.btn {
    display: flex;
    align-items: center;
    gap: 10px;
    height: 28px;
    padding: 0 14px 0 10px;
    border-radius: 4px;
    color: #fff;
    font-size: 12px;
    letter-spacing: 1px;
    text-transform: uppercase;
}

.dark {
    background: #3b3b3b;
}

.teal {
    background: #00897b;
}

.orange {
    background: #f97c23;
}

.primary {
    background: #1976d2;
}

.disabled {
    padding: 0 14px;
    background: #e0e0e0;
    color: #a6a6a6;
}

.outlined {
    gap: 0;
    margin-left: 8px;
    padding: 0 14px;
    border: 1px solid #43a047;
    color: #43a047;
}

/* cards */
.content {
    display: flex;
    flex-direction: column;
    gap: 12px;
    padding: 12px 6px 0 12px;
}

.card {
    background: #fff;
}

.subtabs {
    padding: 10px 16px;
}

.toolbar {
    display: flex;
    justify-content: space-between;
    padding: 18px 16px 0;
}

.search {
    display: flex;
    align-items: center;
    height: 38px;
    margin: 29px 16px 11px;
    padding: 0 12px 0 10px;
    border-radius: 4px;
    box-shadow: 0 3px 1px -2px rgba(0, 0, 0, 0.3), 0 2px 2px rgba(0, 0, 0, 0.2), 0 1px 5px rgba(0, 0, 0, 0.12);
    color: #666;
}

.search input {
    flex: 1;
    border: 0;
    outline: 0;
    background: none;
    font-size: 16px;
}

.search input::placeholder {
    color: #888;
}

.pager {
    display: flex;
    align-items: center;
    justify-content: flex-end;
    height: 36px;
    padding-right: 8px;
    border-top: 1px solid #ddd;
    font-size: 12px;
}

.pager-info {
    margin-right: 32px;
}

.pager button {
    display: flex;
    justify-content: center;
    width: 36px;
    color: #555;
}

.pager button:disabled {
    color: #b0b0b0;
}

.pager-page {
    width: 20px;
    text-align: center;
}

/* channels table */
.channels {
    width: 100%;
    table-layout: fixed;
    border-collapse: separate;
    border-spacing: 0;
}

.channels th {
    height: 33px;
    padding: 2px 0 0;
    border-bottom: 1px solid #ddd;
    font-size: 12px;
    color: #555;
}

.channels td {
    height: 32px;
    padding: 0;
    border-bottom: 1px solid #d5d5d5;
}

.channels .tall td {
    height: 42px;
}

.channels .marked td {
    background: #ffdcac;
    border-color: #d9bb93;
}

.channels .off td {
    background: #e2e2e2;
}

.c-check {
    width: 56px;
}

.c-dot {
    width: 49px;
}

.c-icon {
    width: 80px;
}

.c-tvg {
    width: 126px;
}

.c-id {
    width: 95px;
}

.c-group {
    width: 156px;
}

.c-date {
    width: 217px;
}

.c-actions {
    width: 183px;
}

.channels .c-name {
    padding-left: 16px;
}

.channels .c-tvg, .channels .c-id, .channels .c-group {
    padding-left: 16px;
}

.channels .c-date {
    text-align: center;
}

.channels th.c-actions {
    padding-right: 16px;
    text-align: right;
}

.channels input {
    display: block;
    width: 18px;
    height: 18px;
    margin: 0 auto;
    appearance: none;
    border: 2px solid #666;
    border-radius: 3px;
}

.dot {
    width: 9px;
    height: 9px;
    margin: 0 auto;
    border-radius: 50%;
    background: #43a047;
}

.dot.red {
    background: #ff5252;
}

.dot.grey {
    background: #ccc;
}

.channel-logo {
    width: 25px;
    height: 25px;
    margin: 0 auto;
}

.title {
    display: flex;
    align-items: center;
    gap: 4px;
    line-height: 20px;
}

.source {
    font-size: 13px;
    line-height: 20px;
    color: #888;
}

.badge {
    height: 16px;
    padding: 0 4px;
    border-radius: 4px;
    background: #78909c;
    color: #fff;
    font-size: 10px;
    line-height: 16px;
}

.badge.wide {
    padding: 0 12px;
    background: #b0bec5;
    color: #78868d;
}

.off .title {
    color: #999;
}

.off .badge:not(.wide) {
    background: #b4c1c7;
}

.off .c-date {
    color: #888;
}

.c-tvg {
    color: #888;
    font-size: 13px;
}

.c-id {
    color: #43a047;
    font-size: 13px;
}

.chip {
    display: inline-flex;
    align-items: center;
    gap: 6px;
    height: 24px;
    padding: 0 12px 0 6px;
    border-radius: 12px;
    background: #383880;
    color: #fff;
    font-size: 12px;
    vertical-align: middle;
}

.chip svg {
    width: 12px;
    height: 12px;
}

.off .chip {
    opacity: 0.5;
}

.actions {
    display: flex;
    justify-content: flex-end;
    gap: 6px;
    padding-right: 17px;
}

.edit {
    color: #f97c23;
}

.view {
    color: #546e7a;
}

.copy {
    color: #00897b;
}

.export {
    color: #1565c0;
}

.delete {
    color: #f44350;
}

.fab {
    position: fixed;
    right: 10px;
    bottom: 71px;
    display: flex;
    align-items: center;
    justify-content: center;
    width: 56px;
    height: 56px;
    border-radius: 50%;
    background: #2196f3;
    color: #fff;
    box-shadow: 0 3px 5px -1px rgba(0, 0, 0, 0.2), 0 6px 10px rgba(0, 0, 0, 0.14);
}

/* dialog */
.overlay {
    position: fixed;
    inset: 0;
    display: flex;
    align-items: center;
    justify-content: center;
    padding: 3px 0 0 4px;
    background: rgba(33, 33, 33, 0.46);
}

.dialog {
    width: 100%;
    max-width: 800px;
    border-radius: 4px;
    background: #fff;
    box-shadow: 0 11px 15px -7px rgba(0, 0, 0, 0.2), 0 24px 38px 3px rgba(0, 0, 0, 0.14), 0 9px 46px 8px rgba(0, 0, 0, 0.12);
}

.dialog-body {
    padding: 16px 16px 15px;
}

.dialog h2 {
    font-size: 24px;
    line-height: 32px;
}

.dialog-tabs {
    gap: 8px;
    margin: 16px 0 24px;
}

.grid {
    display: grid;
    grid-template-columns: repeat(12, 1fr);
    gap: 25px 24px;
}

.span-3 {
    grid-column: span 3;
}

.span-4 {
    grid-column: span 4;
}

.span-6 {
    grid-column: span 6;
}

.span-8 {
    grid-column: span 8;
}

.span-12 {
    grid-column: span 12;
}

.field {
    display: flex;
    align-items: flex-end;
    gap: 9px;
    height: 45px;
    color: #6b6b6b;
}

.field > .icon {
    margin-bottom: 5px;
}

.field-box {
    flex: 1;
    min-width: 0;
}

.field label {
    display: block;
    font-size: 12px;
    line-height: 14px;
}

.line {
    display: flex;
    align-items: center;
    gap: 4px;
    height: 31px;
    border-bottom: 1px solid #8a8a8a;
}

.line input, .line select {
    flex: 1;
    min-width: 0;
    padding: 0 0 2px;
    border: 0;
    outline: 0;
    appearance: none;
    background: none;
    color: #1e1e1e;
    font-size: 16px;
}

.line input::placeholder {
    color: #6b6b6b;
}

.line .plain .icon {
    padding: 1px;
}

.line .copy {
    color: #00897b;
    padding-right: 3px;
}

.line .copy .icon {
    padding: 0;
}

.group-badge {
    margin-right: 7px;
}

.picked {
    width: 18px;
    height: 18px;
    margin-right: 10px;
}

.recommended {
    grid-column: 5 / -1;
    margin: 19px 0 0 31px;
    padding: 16px 16px 15px;
    border: 1px solid #ddd;
    border-radius: 4px;
}

.recommended-title {
    font-size: 12px;
    line-height: 16px;
    letter-spacing: 2px;
    text-transform: uppercase;
}

.recommended-icons {
    display: flex;
    gap: 1px;
    margin-top: 7px;
}

.recommended-icons svg {
    width: 38px;
    height: 38px;
}

.dialog-actions {
    display: flex;
    justify-content: flex-end;
    gap: 18px;
    height: 53px;
    padding-right: 16px;
    border-top: 1px solid #ddd;
}

.dialog-actions button {
    font-size: 14px;
    letter-spacing: 1px;
    text-transform: uppercase;
}

.dialog-actions .accent {
    color: #1e88e5;
}

/* text inside logos */
.logo-inter {
    font-size: 7px;
    font-weight: bold;
    fill: #1565a8;
}

.logo-krym {
    font-size: 10px;
    font-weight: bold;
    fill: #e91e56;
}

.logo-krym-dark {
    font-size: 8px;
    font-weight: bold;
    fill: #eadfd8;
}

.logo-24 {
    font-size: 16px;
    font-weight: bold;
    fill: #fff;
}

.logo-24-sub {
    font-size: 6px;
    font-weight: bold;
    fill: #fff;
}

.logo-millet {
    font-size: 5px;
    font-weight: bold;
    fill: #7fb4c6;
}

.logo-biz {
    font-size: 10px;
    font-weight: bold;
    fill: #fff;
}
```
FILE: script.js
```js
var rows = [
    { logo: 'inter', tall: true, marked: true, date: '4 месяца назад' },
    { logo: 'one', tall: true, marked: true, date: '4 месяца назад' },
    { logo: 'one', tall: true, marked: true, date: '4 месяца назад' },
    { logo: 'one', tall: true, marked: true, date: '4 месяца назад' },
    { logo: 'one', tall: true, marked: true, date: '4 месяца назад' },
    { logo: 'one', tall: true, marked: true, date: '4 месяца назад' },
    { logo: 'one-dark', tall: true, marked: true, date: '4 месяца назад' },
    { logo: 'krym', date: '9 месяцев назад' },
    { logo: '24', date: '9 месяцев назад' },
    { logo: 'atr', tall: true, dot: 'grey', name: 'ATR [OTTBLUE]', source: 'Источник: + OTTBLUE', id: '2085', date: '4 месяца назад' },
    { logo: 'millet', name: 'Миллет', id: '2172', date: '9 месяцев назад' },
    { logo: 'milliy', name: 'Миллий ТВ', date: '9 месяцев назад' },
    { logo: 'kazakh', off: true, dot: 'red', name: 'Казах ТВ (УЗБЕК)', id: '2574', date: '9 месяцев назад' },
    { logo: 'biz', dot: 'red', name: 'Biz Cinema', date: '9 месяцев назад' },
    { logo: 'dark', tall: true, marked: true, name: 'Ozbekiston', source: 'Источник: + OTTBLUE', id: '2644', date: '4 месяца назад' }
];

function action(cls, icon, title) {
    return `<button class="${cls}" aria-label="${title}"><svg class="icon-sm"><use href="#i-${icon}"/></svg></button>`;
}

function nameCell(row) {
    if (!row.name) {
        return '';
    }
    return `<div class="title">${row.name} <span class="badge">SD</span>${row.off ? '<span class="badge wide">ВЫКЛЮЧЕН</span>' : ''}</div>` +
        (row.source ? `<div class="source">${row.source}</div>` : '');
}

document.getElementById('rows').innerHTML = rows.map(function (row) {
    var cls = (row.tall ? 'tall ' : '') + (row.marked ? 'marked ' : '') + (row.off ? 'off' : '');
    // the group chip is hidden behind the dialog for rows that have no name yet
    var chip = row.name ? '<span class="chip"><svg><use href="#i-pencil"/></svg>ПЕРВЫЕ</span>' : '';
    return `<tr class="${cls}">
        <td><input type="checkbox" aria-label="Выбрать"></td>
        <td><div class="dot ${row.dot || ''}"></div></td>
        <td><svg class="channel-logo"><use href="#l-${row.logo}"/></svg></td>
        <td class="c-name">${nameCell(row)}</td>
        <td class="c-tvg">${row.id ? 'tvg-id:' : ''}</td>
        <td class="c-id">${row.id || ''}</td>
        <td class="c-group">${chip}</td>
        <td class="c-date">${row.date}</td>
        <td><div class="actions">
            ${action('edit', 'pencil', 'Редактировать')}
            ${action('view', row.off ? 'eye-off' : 'eye', 'Показать')}
            ${action('copy', 'copy', 'Копировать')}
            ${action('export', 'export', 'Переместить')}
            ${action('export', 'duplicate', 'Дублировать')}
            ${action('delete', 'delete', 'Удалить')}
        </div></td>
    </tr>`;
}).join('');
```
